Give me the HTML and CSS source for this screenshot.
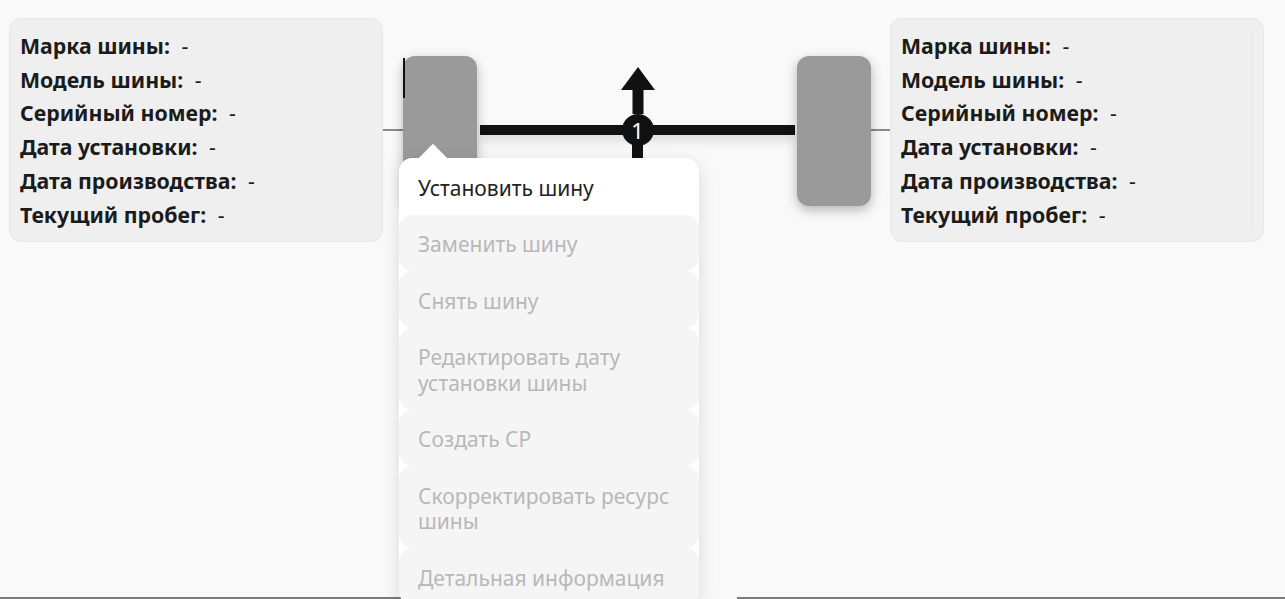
FILE: index.html
```html
<!DOCTYPE html>
<html lang="ru">
<head>
<meta charset="utf-8">
<title>Ось</title>
<link rel="stylesheet" href="styles.css">
</head>
<body>
<div class="page">
  <div class="row">
    <div class="card">
      <div class="card-inner">
        <div class="line"><b>Марка шины:</b> <span>-</span></div>
        <div class="line"><b>Модель шины:</b> <span>-</span></div>
        <div class="line"><b>Серийный номер:</b> <span>-</span></div>
        <div class="line"><b>Дата установки:</b> <span>-</span></div>
        <div class="line"><b>Дата производства:</b> <span>-</span></div>
        <div class="line"><b>Текущий пробег:</b> <span>-</span></div>
      </div>
    </div>
    <div class="axle">
      <div class="stub"></div>
      <div class="wheel wheel-left"><span class="cursor"></span></div>
      <div class="bar">
        <svg class="arrow" width="34" height="47" viewBox="0 0 34 47"><polygon points="17,0 34,23 0,23" fill="#111"/><rect x="11.5" y="22" width="11" height="25" fill="#111"/></svg>
        <div class="hub">1</div>
        <div class="down"></div>
      </div>
      <div class="wheel wheel-right"></div>
      <div class="stub stub-right"></div>
    </div>
    <div class="card card-right">
      <div class="card-inner">
        <div class="line"><b>Марка шины:</b> <span>-</span></div>
        <div class="line"><b>Модель шины:</b> <span>-</span></div>
        <div class="line"><b>Серийный номер:</b> <span>-</span></div>
        <div class="line"><b>Дата установки:</b> <span>-</span></div>
        <div class="line"><b>Дата производства:</b> <span>-</span></div>
        <div class="line"><b>Текущий пробег:</b> <span>-</span></div>
      </div>
    </div>
  </div>
  <div class="bottom"><div class="seg seg-left"></div><div class="seg seg-right"></div></div>
  <div class="menu">
    <div class="item active">Установить шину</div>
    <div class="item">Заменить шину</div>
    <div class="item">Снять шину</div>
    <div class="item">Редактировать дату<br>установки шины</div>
    <div class="item">Создать СР</div>
    <div class="item">Скорректировать ресурс<br>шины</div>
    <div class="item">Детальная информация</div>
  </div>
</div>
</body>
</html>
```
FILE: styles.css
```css
html, body {
  margin: 0;
  padding: 0;
  overflow: hidden;
  background: #f9f9f9;
}
body {
  font-family: "Noto Sans", "Open Sans", sans-serif;
  color: #1b1b1b;
}
.page {
  position: relative;
  height: 599px;
  display: flex;
  flex-direction: column;
  justify-content: space-between;
}
.row {
  display: flex;
  align-items: center;
  padding: 18px 0 0 9px;
}
.card {
  width: 374px;
  height: 224px;
  box-sizing: border-box;
  background: #efefef;
  border: 1px solid #e7e7e7;
  border-radius: 12px;
  padding: 10px 10px 10px 10px;
}
.card-inner {
  height: 100%;
}
.card-right .card-inner {
  border-right: 1px solid #e6e6e6;
}
.line {
  font-size: 21.3px;
  line-height: 33.7px;
  white-space: nowrap;
}
.line b {
  font-weight: 700;
  margin-right: 6px;
}
.line span {
  font-weight: 400;
}
.axle {
  width: 507px;
  height: 224px;
  display: flex;
  align-items: center;
}
.stub {
  width: 20px;
  height: 2px;
  background: #8a8a8a;
}
.stub-right {
  width: 19px;
}
.wheel {
  width: 74px;
  height: 150px;
  margin-top: 2px;
  background: #9a9a9a;
  border-radius: 12px;
  box-shadow: 0 4px 12px rgba(0, 0, 0, 0.28);
  position: relative;
  flex: none;
}
.cursor {
  position: absolute;
  left: 0;
  top: 2px;
  width: 2px;
  height: 40px;
  background: #111;
}
.bar {
  flex: 1;
  height: 10px;
  margin: 0 2px 0 3px;
  background: #111;
  position: relative;
  box-shadow: 0 6px 10px rgba(0, 0, 0, 0.12);
}
.arrow {
  position: absolute;
  left: 50%;
  top: -58px;
  margin-left: -17px;
  display: block;
}
.hub {
  position: absolute;
  left: 50%;
  top: -11px;
  margin-left: -16px;
  width: 32px;
  height: 32px;
  border-radius: 50%;
  background: #111;
  color: #fff;
  font-size: 22px;
  line-height: 32px;
  text-align: center;
  z-index: 2;
}
.down {
  position: absolute;
  left: 50%;
  margin-left: -5.5px;
  top: 10px;
  width: 11px;
  height: 70px;
  background: #111;
}
.bottom {
  display: flex;
  height: 2px;
}
.seg {
  height: 2px;
  background: #7a7a7a;
}
.seg-left {
  width: 401px;
}
.seg-right {
  margin-left: auto;
  width: 548px;
}
.menu {
  position: absolute;
  left: 399px;
  top: 158px;
  width: 300px;
  background: #fff;
  border-radius: 14px;
  box-shadow: 0 4px 18px rgba(0, 0, 0, 0.13);
  z-index: 5;
}
.menu::before {
  content: "";
  position: absolute;
  left: 24px;
  top: -10px;
  width: 20px;
  height: 20px;
  background: #fff;
  transform: rotate(45deg);
}
.item {
  position: relative;
  padding: 17.5px 19px 13.5px;
  font-size: 21px;
  line-height: 25.5px;
  color: #b8b8b8;
  background: #f5f5f5;
  border-radius: 14px;
}
.item.active {
  color: #222;
  background: #fff;
}
```
